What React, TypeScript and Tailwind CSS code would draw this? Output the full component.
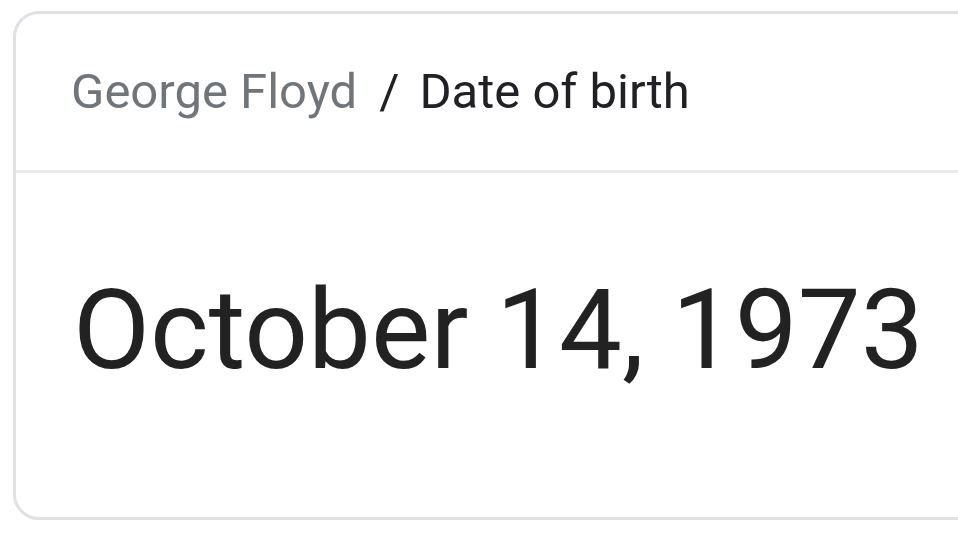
import React from "react";

const App = () => {
	return (
		<main className="w-[958px] h-[536px] bg-white overflow-hidden pt-[11px] pl-[13px] font-['Roboto',sans-serif]">
			<div className="w-[1000px] h-[509px] border-[3px] border-[#dfe1e5] rounded-[26px] flex flex-col">
				<div className="h-[156px] flex items-center pl-[55px] pb-[2px] text-[49px] leading-none">
					<span className="text-[#70757a]">George Floyd</span>
					<span className="text-[#202124] ml-[22px] mr-[20px]">/</span>
					<span className="text-[#202124]">Date of birth</span>
				</div>
				<div className="h-[3px] bg-[#ebebeb]" />
				<div className="flex-1 pl-[57px] pt-[101px]">
					<p className="text-[112px] leading-none text-[#222222]">October 14, 1973</p>
				</div>
			</div>
		</main>
	);
};

export default App;
